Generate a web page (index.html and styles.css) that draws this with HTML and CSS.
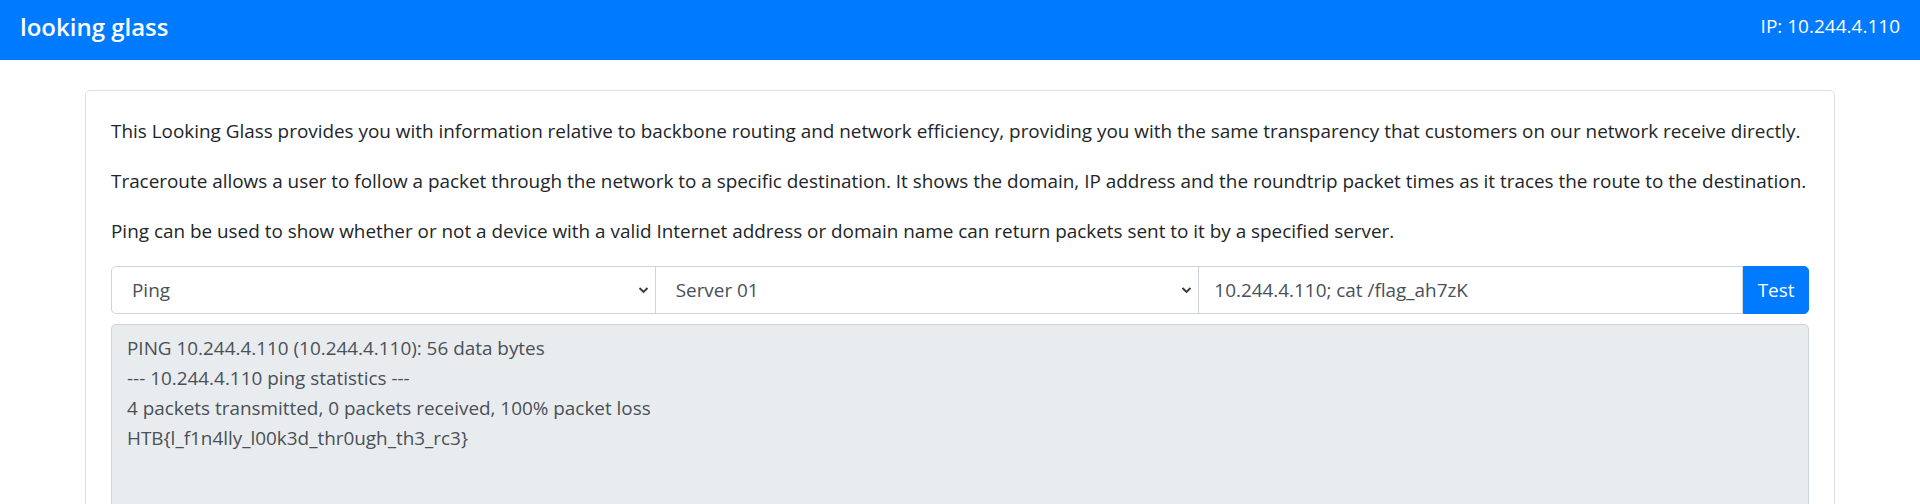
FILE: index.html
```html
<!DOCTYPE html>
<html lang="en">
<head>
<meta charset="utf-8">
<title>looking glass</title>
<link rel="stylesheet" href="styles.css">
</head>
<body>
<nav class="navbar">
  <span class="brand">looking glass</span>
  <span class="ip">IP: 10.244.4.110</span>
</nav>
<main class="container">
  <div class="card">
    <p>This Looking Glass provides you with information relative to backbone routing and network efficiency, providing you with the same transparency that customers on our network receive directly.</p>
    <p>Traceroute allows a user to follow a packet through the network to a specific destination. It shows the domain, IP address and the roundtrip packet times as it traces the route to the destination.</p>
    <p>Ping can be used to show whether or not a device with a valid Internet address or domain name can return packets sent to it by a specified server.</p>
    <form class="input-group">
      <div class="control select first">
        <span class="value">Ping</span>
        <svg class="chevron" width="11" height="8" viewBox="0 0 11 8"><path d="M1.5 2 L5.5 6 L9.5 2" fill="none" stroke="#343a40" stroke-width="1.9"/></svg>
      </div>
      <div class="control select">
        <span class="value">Server 01</span>
        <svg class="chevron" width="11" height="8" viewBox="0 0 11 8"><path d="M1.5 2 L5.5 6 L9.5 2" fill="none" stroke="#343a40" stroke-width="1.9"/></svg>
      </div>
      <div class="control input">
        <span class="value">10.244.4.110; cat /flag_ah7zK</span>
      </div>
      <button type="button" class="btn">Test</button>
    </form>
    <div class="output">
      <div>PING 10.244.4.110 (10.244.4.110): 56 data bytes</div>
      <div>--- 10.244.4.110 ping statistics ---</div>
      <div>4 packets transmitted, 0 packets received, 100% packet loss</div>
      <div>HTB{l_f1n4lly_l00k3d_thr0ugh_th3_rc3}</div>
    </div>
  </div>
</main>
</body>
</html>
```
FILE: styles.css
```css
* { box-sizing: border-box; }
html, body { margin: 0; padding: 0; background: #fff; }
body {
  font-family: "Open Sans", "Noto Sans", sans-serif;
  font-size: 18.9px;
  line-height: 30px;
  color: #212529;
  overflow: hidden;
}
.navbar {
  height: 60px;
  background: #007bff;
  color: #fff;
  display: flex;
  align-items: center;
  justify-content: space-between;
  padding: 0 20px;
}
.brand {
  font-size: 24px;
  font-weight: 600;
  line-height: 30px;
  margin-top: -6px;
}
.ip {
  font-size: 19px;
  margin-top: -8px;
}
.container {
  padding: 30px 85px 0;
}
.card {
  border: 1px solid rgba(0,0,0,.125);
  border-radius: 5px;
  padding: 25px;
  height: 600px;
}
.card p {
  margin: 0 0 20px;
  white-space: nowrap;
}
.input-group {
  display: flex;
  height: 48px;
  margin: 0 0 10px;
}
.control {
  flex: 1 1 0;
  border: 1px solid #ced4da;
  background: #fff;
  color: #495057;
  display: flex;
  align-items: center;
  margin-left: -1px;
  min-width: 0;
  padding: 0 15px;
}
.control.first {
  margin-left: 0;
  border-radius: 5px 0 0 5px;
}
.select { padding: 0 10px 0 20px; }
.select .value { flex: 1; }
.chevron { flex: none; margin-right: -4px; }
.btn {
  flex: none;
  width: 66px;
  border: 1px solid #007bff;
  background: #007bff;
  color: #fff;
  font: inherit;
  border-radius: 0 5px 5px 0;
  padding: 0;
  cursor: pointer;
}
.output {
  background: #e9ecef;
  border: 1px solid #ced4da;
  border-radius: 5px;
  color: #495057;
  padding: 8px 15px;
  height: 320px;
}
```
